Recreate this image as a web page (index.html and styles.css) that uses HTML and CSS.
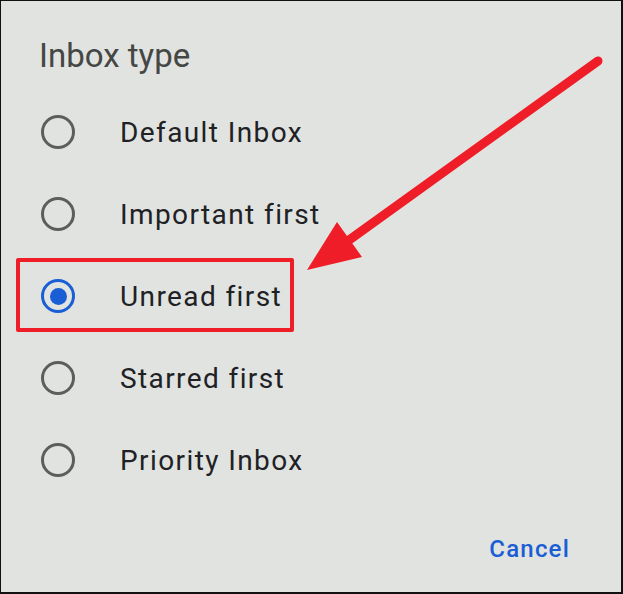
FILE: index.html
```html
<!DOCTYPE html>
<html>
<head>
<meta charset="utf-8">
<link rel="stylesheet" href="styles.css">
</head>
<body>
<div class="dialog">
  <div class="title">Inbox type</div>
  <div class="options">
    <div class="option"><span class="radio"></span><span class="label">Default Inbox</span></div>
    <div class="option"><span class="radio"></span><span class="label">Important first</span></div>
    <div class="option"><span class="radio checked"></span><span class="label">Unread first</span></div>
    <div class="option"><span class="radio"></span><span class="label">Starred first</span></div>
    <div class="option"><span class="radio"></span><span class="label">Priority Inbox</span></div>
  </div>
  <div class="actions"><span class="cancel">Cancel</span></div>
  <div class="highlight"></div>
  <svg class="arrow" width="623" height="594" viewBox="0 0 623 594">
    <line x1="598" y1="61" x2="345" y2="243" stroke="#ee1d27" stroke-width="9" stroke-linecap="round"/>
    <polygon points="337,222 362,257 307,270" fill="#ee1d27"/>
  </svg>
</div>
</body>
</html>
```
FILE: styles.css
```css
html, body {
  margin: 0;
  padding: 0;
}
.dialog {
  position: relative;
  box-sizing: border-box;
  width: 623px;
  height: 594px;
  background: #e1e3e0;
  border-style: solid;
  border-color: #111;
  border-width: 1px 2px 2px 1px;
  font-family: Roboto, "Liberation Sans", sans-serif;
  display: flex;
  flex-direction: column;
}
.title {
  padding: 36px 0 0 38px;
  font-size: 33px;
  line-height: 38px;
  color: #454745;
}
.options {
  display: flex;
  flex-direction: column;
  margin-top: 16px;
}
.option {
  display: flex;
  align-items: center;
  height: 82px;
}
.radio {
  box-sizing: border-box;
  width: 34px;
  height: 34px;
  border-radius: 50%;
  border: 3.5px solid #5c5e5c;
  margin-left: 40px;
  margin-right: 45px;
  display: flex;
  align-items: center;
  justify-content: center;
}
.radio.checked {
  border-color: #1a5ed6;
}
.radio.checked::after {
  content: "";
  width: 17px;
  height: 17px;
  border-radius: 50%;
  background: #1a5ed6;
}
.label {
  font-size: 28px;
  letter-spacing: 1.4px;
  color: #202124;
}
.actions {
  display: flex;
  justify-content: flex-end;
  padding: 34px 51px 0 0;
}
.cancel {
  color: #1a5ed6;
  font-size: 24px;
  font-weight: 500;
  letter-spacing: 1.2px;
}
.highlight {
  position: absolute;
  left: 15px;
  top: 257px;
  width: 278px;
  height: 74px;
  box-sizing: border-box;
  border: 4px solid #ee1d27;
  border-radius: 2px;
}
.arrow {
  position: absolute;
  left: -1px;
  top: -1px;
}
```
